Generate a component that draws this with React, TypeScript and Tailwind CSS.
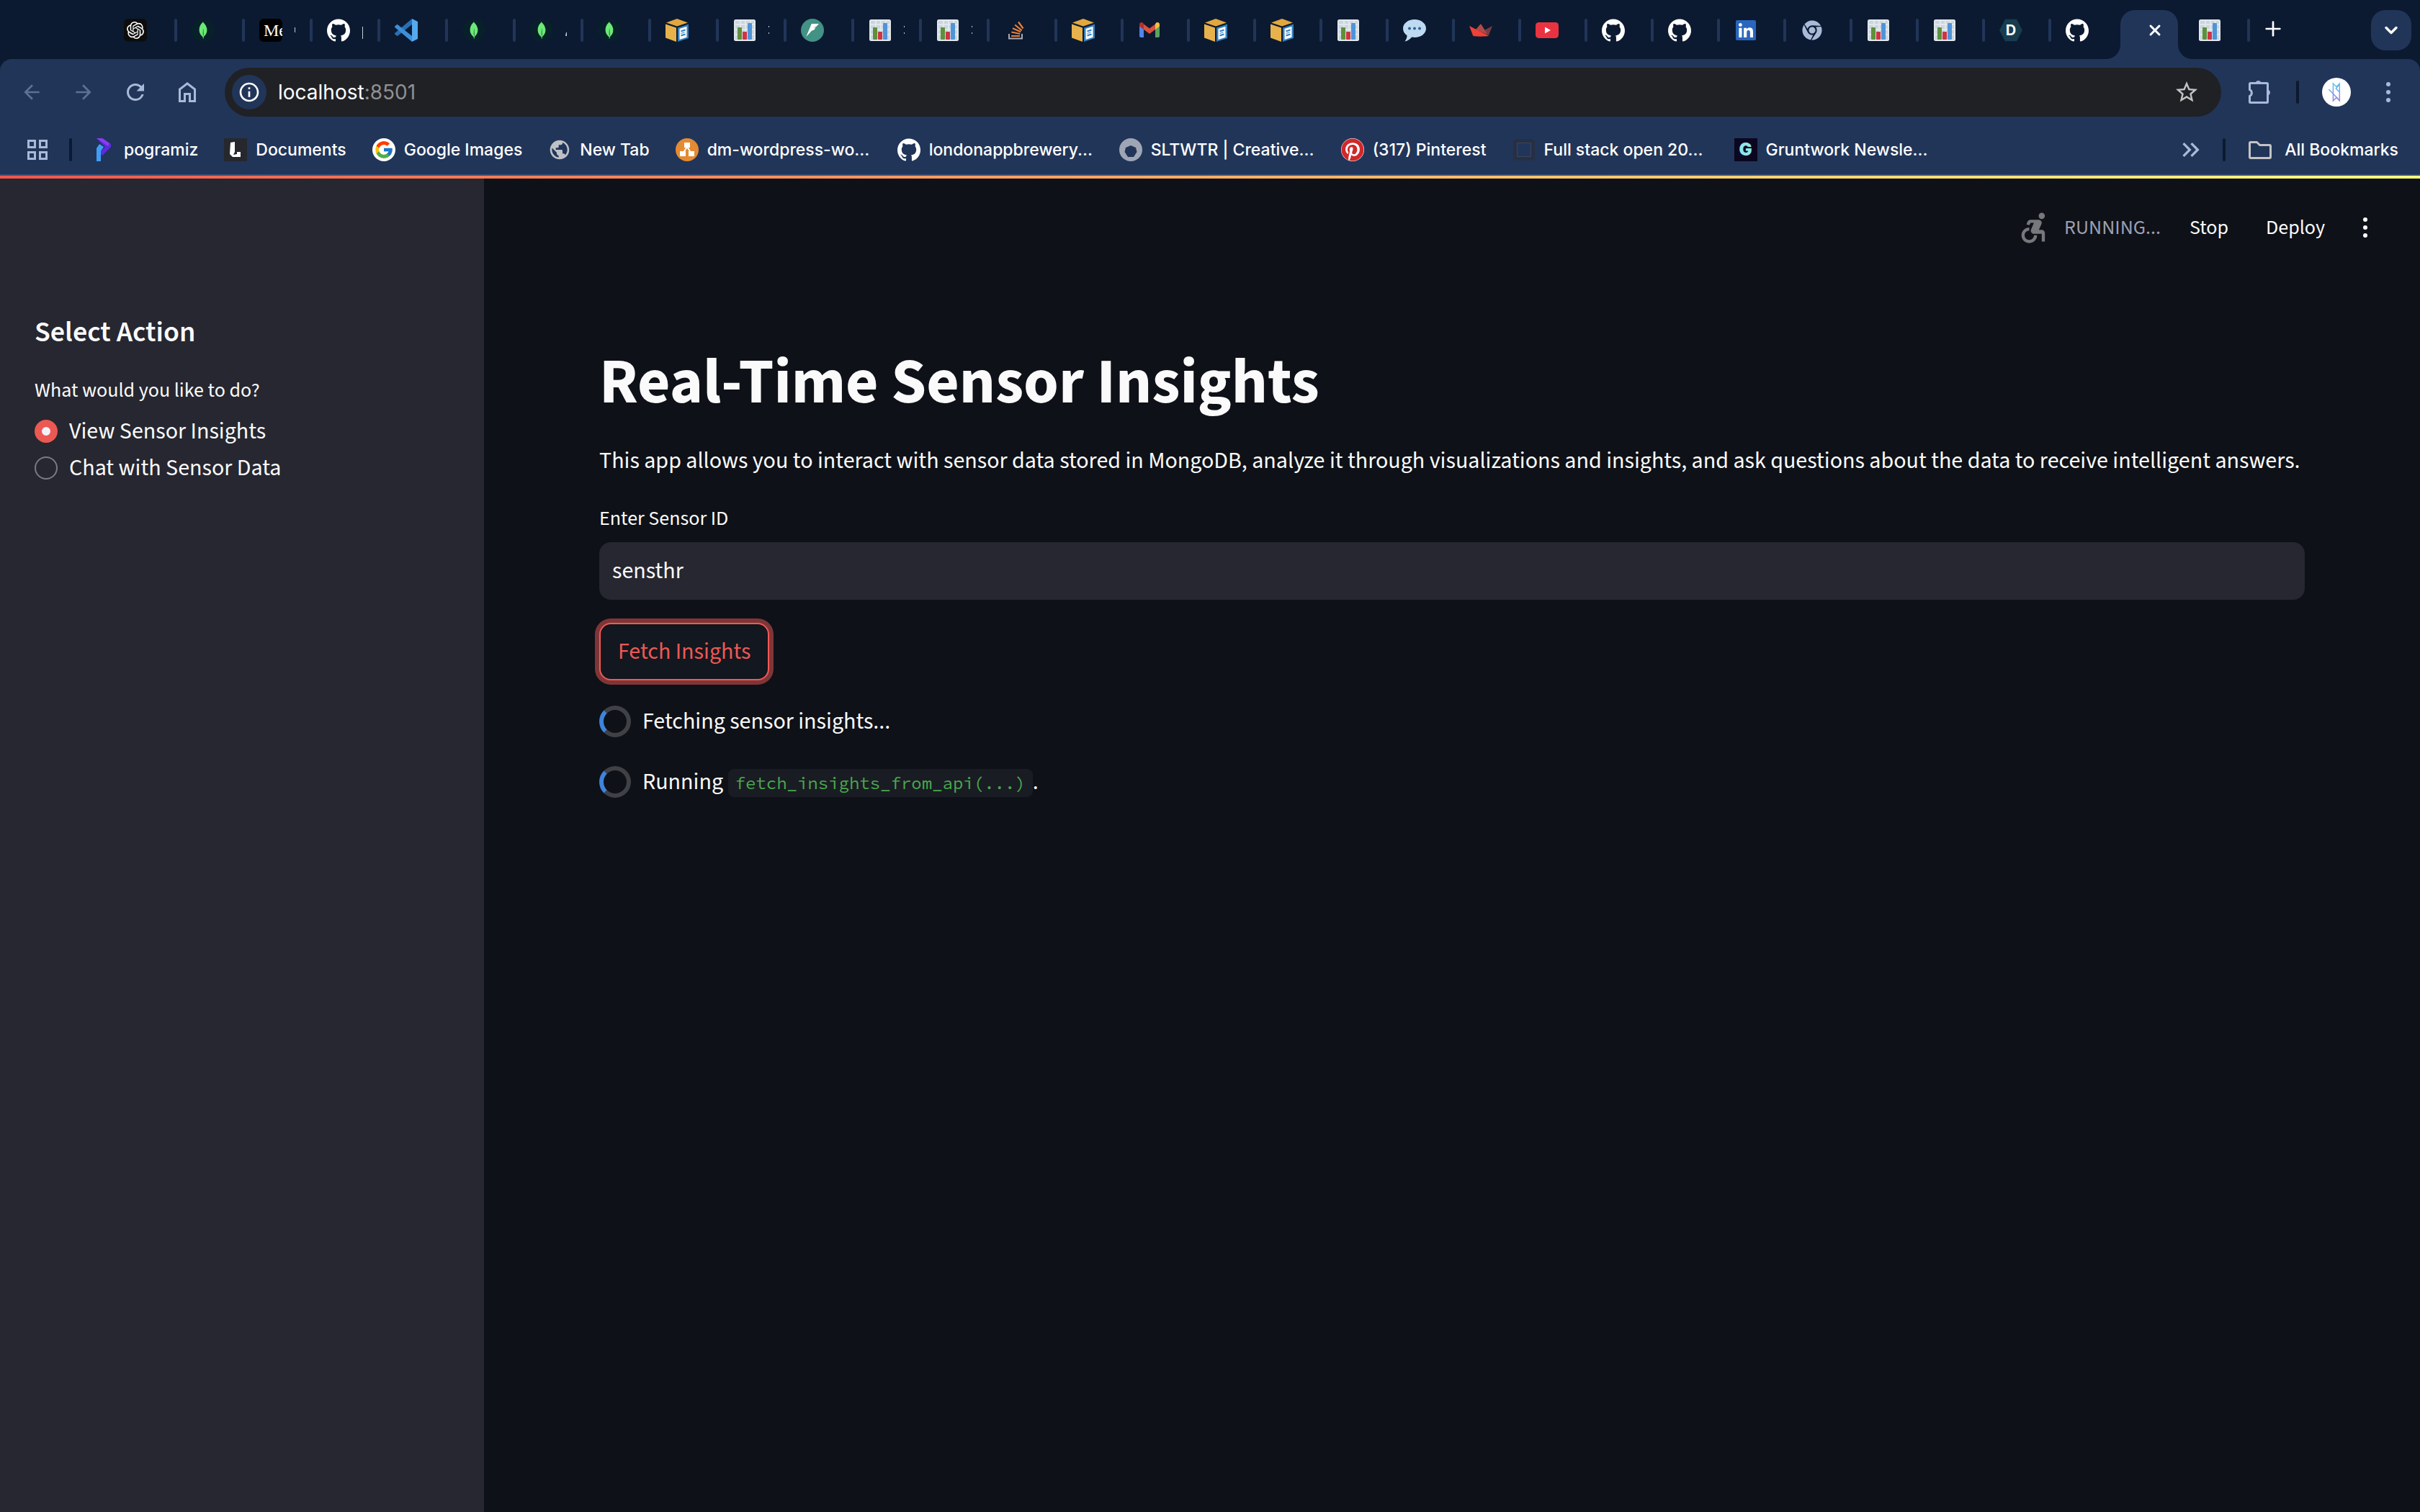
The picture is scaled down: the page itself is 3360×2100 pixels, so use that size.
import type { ReactNode } from 'react'
import { SiOpenai, SiMongodb, SiGithub } from 'react-icons/si'
import { FaChrome, FaLinkedin, FaPinterest } from 'react-icons/fa'
import { FcGoogle } from 'react-icons/fc'
import {
  MdAccessibleForward,
  MdArrowBack,
  MdArrowForward,
  MdInfoOutline,
  MdKeyboardDoubleArrowRight,
  MdPublic,
  MdRefresh,
  MdStarBorder,
} from 'react-icons/md'
import { ChevronDown, Plus, X } from 'lucide-react'

const OpenAiIcon = () => (
  <span className="flex size-8 items-center justify-center rounded-md bg-[#0d0d0d]">
    <SiOpenai className="size-6 text-white" />
  </span>
)

const MongoIcon = () => (
  <span className="flex size-8 items-center justify-center rounded-full bg-[#08202a]">
    <SiMongodb className="size-6 text-[#6cea76]" />
  </span>
)

const MediumIcon = () => (
  <span className="flex size-8 items-center overflow-hidden rounded-md bg-black pl-1.5 font-['Liberation_Serif',serif] text-2xl text-white">
    Me
  </span>
)

const GithubIcon = () => <SiGithub className="size-8 text-white" />

const VsCodeIcon = () => (
  <svg viewBox="0 0 32 32" className="size-8">
    <path d="M24 0v8L4.500 23.500a1.500 1.500 0 0 1-2 0L.5 21.800a1.300 1.300 0 0 1 0-2z" fill="#2a6fb5" />
    <path d="M24 32v-8L4.500 8.500a1.500 1.500 0 0 0-2 0L.5 10.200a1.300 1.300 0 0 0 0 2z" fill="#3c8fd8" />
    <path d="M24 0l8 4v24l-8 4z" fill="#55a9ee" />
  </svg>
)

const BoxIcon = () => (
  <svg viewBox="0 0 32 32" className="size-8">
    <path d="M1 5.500L16 0l15 5.500L16 10.500z" fill="#e2a83e" />
    <path d="M0 7.500l15 5V32L0 26.500z" fill="#e7b24b" />
    <path d="M17 12.500l15-5V27l-15 5z" fill="#2f7fc0" />
    <path d="M19.500 14l10-3.300v15l-10 3.300z" fill="#fff" />
    <path d="M21.500 17.500l6-2M21.500 23.500l6-2" stroke="#2f7fc0" strokeWidth="2" />
    <path d="M21.500 20.500l5-1.700" stroke="#2f7fc0" strokeWidth="1" />
  </svg>
)

const ChartIcon = () => (
  <svg viewBox="0 0 32 32" className="size-8">
    <rect x="1" y="1" width="30" height="30" rx="2.500" fill="#e1e8ed" />
    <path d="M3 3h6v4H3zM11 3h5v4h-5zM18 3h5v4h-5zM25 3h4v4h-4zM3 9h6v5H3zM11 9h5v5h-5zM18 9h5v5h-5zM25 9h4v5h-4zM3 16h6v5H3zM11 16h5v5h-5zM18 16h5v5h-5zM25 16h4v5h-4zM3 23h6v6H3zM11 23h5v6h-5zM18 23h5v6h-5zM25 23h4v6h-4z" fill="#ccd6dd" />
    <rect x="6" y="12" width="6" height="17" rx="1" fill="#5c913b" />
    <rect x="13" y="18" width="6" height="11" rx="1" fill="#cc3545" />
    <rect x="20" y="6" width="6" height="23" rx="1" fill="#4f94d8" />
  </svg>
)

const BoltIcon = () => (
  <svg viewBox="0 0 32 32" className="size-8">
    <circle cx="16" cy="16" r="16" fill="#429285" />
    <path d="M14.700 7H25l-4 4.300-4 .9h3.500L18.300 15.500 15 16.800 7.300 25z" fill="#fff" />
  </svg>
)

const StackIcon = () => (
  <svg viewBox="0 0 32 32" className="size-8">
    <path d="M7 21v6.500h18V21" fill="none" stroke="#a7aaae" strokeWidth="2" />
    <path d="M10 24h12M10.300 18.500l12 2.500M12 13.200l11.200 5M15.200 8.500l9.500 7.800M20 4.500l6.500 9" fill="none" stroke="#e8803a" strokeWidth="2.200" />
  </svg>
)

const GmailIcon = () => (
  <svg viewBox="0 0 32 32" className="size-8">
    <path d="M2 8v16a2 2 0 0 0 2 2h4V11z" fill="#4f86ec" />
    <path d="M30 8v16a2 2 0 0 1-2 2h-4V11z" fill="#58a55c" />
    <path d="M24 7.500V15l6-4.500V8a3 3 0 0 0-4.800-2.400z" fill="#f1bf42" />
    <path d="M8 7.500l8 6 8-6V15l-8 6-8-6z" fill="#d95140" />
    <path d="M8 15V7.500L6.800 5.600A3 3 0 0 0 2 8v2.500z" fill="#b33128" />
  </svg>
)

const SpeechIcon = () => (
  <svg viewBox="0 0 32 32" className="size-8">
    <path d="M16 1c9 0 16 5.500 16 12.500S25 26 16 26c-1.300 0-2.600-.1-3.800-.4C10 28.500 6.500 31 2.500 31.500 4.500 29 5.600 26 5.500 23.200 2 21 0 17.500 0 13.500 0 6.500 7 1 16 1z" fill="#bddaf2" />
    <circle cx="9" cy="13.500" r="2" fill="#35618f" />
    <circle cx="16" cy="13.500" r="2" fill="#35618f" />
    <circle cx="23" cy="13.500" r="2" fill="#35618f" />
  </svg>
)

const CrownIcon = () => (
  <svg viewBox="0 0 32 32" className="size-8">
    <path d="M32 10l-5 13-8-6z" fill="#7a3b42" />
    <path d="M16 7l9.500 15L9 15z" fill="#b14a4a" />
    <path d="M0 10l27 13.500c-.5 1-10 1.500-20.500.8-.8 0-1.300-.3-1.500-1z" fill="#ef4136" />
  </svg>
)

const YoutubeIcon = () => (
  <svg viewBox="0 0 32 32" className="size-8">
    <rect y="5" width="32" height="22" rx="4.500" fill="#ea3340" />
    <path d="M13 11.500v9l8-4.500z" fill="#fff" />
  </svg>
)

const LinkedinIcon = () => (
  <span className="flex size-8 items-center justify-center">
    <FaLinkedin className="size-8 bg-[linear-gradient(#fff,#fff)] bg-[length:20px_20px] bg-center bg-no-repeat text-[#2966bd]" />
  </span>
)

const ChromeIcon = () => (
  <span className="flex size-8 items-center justify-center">
    <FaChrome className="size-7 text-[#a9bad9]" />
  </span>
)

const LetterDIcon = () => (
  <span className="flex size-8 items-center justify-center bg-[#173d4e] font-['Inter',sans-serif] text-xl font-bold text-white [clip-path:polygon(25%_2%,75%_2%,100%_50%,75%_98%,25%_98%,0_50%)]">
    D
  </span>
)

const ProgramizIcon = () => (
  <svg viewBox="0 0 32 32" className="size-8">
    <path d="M6 0h8l12 8v4L14 24l-4-4 8-8z" fill="#5b2be0" />
    <path d="M6 0h8l10 7-2 4z" fill="#8a3df0" />
    <path d="M6 14l4-6 6 4-4 6v14H6z" fill="#3f9df5" />
  </svg>
)

const DocumentsIcon = () => (
  <svg viewBox="0 0 32 32" className="size-8">
    <rect width="32" height="32" fill="#26282e" />
    <path d="M9 6l6-1v14l-2 4 5-1v-3h5v7H12l-4-4z" fill="#fff" />
  </svg>
)

const GoogleIcon = () => (
  <span className="flex size-8 items-center justify-center rounded-full bg-white">
    <FcGoogle className="size-7" />
  </span>
)

const GlobeIcon = () => <MdPublic className="size-8 text-[#bfc1c5]" />

const NodesIcon = () => (
  <svg viewBox="0 0 32 32" className="size-8">
    <circle cx="16" cy="16" r="16" fill="#e38b33" />
    <path d="M16 12l-6 9M16 12l6 9" stroke="#fff" strokeWidth="2" />
    <path d="M12 6h8v7h-8zM6 18h8v7H6zM18 18h8v7h-8z" fill="#fff" />
  </svg>
)

const RingIcon = () => (
  <svg viewBox="0 0 32 32" className="size-8">
    <circle cx="16" cy="16" r="16" fill="#9ea6b6" />
    <path d="M16 10l7 3 1.500 6L20 26h-8l-4.500-7L9 13z" fill="#213559" />
  </svg>
)

const PinterestIcon = () => (
  <span className="flex size-8 rounded-full bg-white">
    <FaPinterest className="size-8 text-[#d0282b]" />
  </span>
)

const FrameIcon = () => (
  <svg viewBox="0 0 32 32" className="size-8">
    <rect x="4" y="4" width="24" height="24" rx="1" fill="none" stroke="#272f42" strokeWidth="6" />
    <rect x="6.500" y="6.500" width="19" height="19" fill="none" stroke="#3a4560" strokeWidth="1" />
  </svg>
)

const GruntworkIcon = () => (
  <span className="flex size-8 items-center justify-center bg-[#0b0720] font-['Inter',sans-serif] text-2xl font-black text-[#8fe5e6]">
    G
  </span>
)

const HomeIcon = () => (
  <svg viewBox="0 0 40 40" className="size-10" fill="none" stroke="currentColor" strokeWidth="3">
    <path d="M9.500 32.500V16L20 8l10.500 8v16.500H23.500V22.500h-7v10z" />
  </svg>
)

const PuzzleIcon = () => (
  <svg viewBox="0 0 32 32" className="size-8">
    <path
      d="M2.500 3.500h23a1 1 0 0 1 1 1v25a1 1 0 0 1-1 1h-23a1 1 0 0 1-1-1v-8a5 5 0 0 0 0-9v-8a1 1 0 0 1 1-1z"
      fill="none"
      stroke="currentColor"
      strokeWidth="3"
    />
    <path d="M9.500 3a4.500 4.500 0 0 1 8 0zM27 12.500a4.500 4.500 0 0 1 0 8z" fill="currentColor" stroke="currentColor" />
  </svg>
)

const AppsIcon = () => (
  <svg viewBox="0 0 28 28" className="size-7" fill="none" stroke="currentColor" strokeWidth="3">
    <path d="M1.500 1.500h9v9h-9zM17.500 1.500h9v9h-9zM1.500 17.500h9v9h-9zM17.500 17.500h9v9h-9z" />
  </svg>
)

const FolderIcon = () => (
  <svg viewBox="0 0 32 32" className="size-8 text-[#c4c4c4]" fill="none" stroke="currentColor" strokeWidth="3" strokeLinejoin="round">
    <path d="M3 5.500h8.500l4 4H29a1.500 1.500 0 0 1 1.500 1.500v15A1.500 1.500 0 0 1 29 27.500H3A1.500 1.500 0 0 1 1.500 26V7A1.500 1.500 0 0 1 3 5.500z" />
  </svg>
)

const AvatarIcon = () => (
  <svg viewBox="0 0 40 40" className="size-10">
    <defs>
      <linearGradient id="avatar" x1="0" y1="0" x2="0" y2="1">
        <stop offset="0" stopColor="#5cc4ee" />
        <stop offset="1" stopColor="#9a7fe0" />
      </linearGradient>
    </defs>
    <circle cx="20" cy="20" r="20" fill="#fff" />
    <path d="M9.300 16L22.500 29.500M15.400 32V8l4.600 4.500L24.300 8v24L20 27.500zM24.300 9l-5 6 5 5" fill="none" stroke="url(#avatar)" strokeWidth="1.500" />
  </svg>
)

const Dots = () => (
  <svg viewBox="0 0 8 28" className="h-7 w-2" fill="currentColor">
    <circle cx="4" cy="3" r="3" />
    <circle cx="4" cy="14" r="3" />
    <circle cx="4" cy="25" r="3" />
  </svg>
)

// Slivers of the tab titles that stay visible beside the icon
const slivers = {
  curve: 'M0 8h1v7H0z',
  stem: 'M0 7h1v17H0z',
  slant: 'M1 15h1v5H0z',
  colon: 'M0 6h1v2H0zM0 15h1v2H0z',
}

type TabItem = { name: string; icon: () => ReactNode; sliver?: keyof typeof slivers }

const wideTabs: TabItem[] = [
  { name: 'ChatGPT', icon: OpenAiIcon },
  { name: 'MongoDB', icon: MongoIcon },
  { name: 'Medium', icon: MediumIcon, sliver: 'curve' },
  { name: 'GitHub', icon: GithubIcon, sliver: 'stem' },
  { name: 'VS Code', icon: VsCodeIcon },
  { name: 'MongoDB', icon: MongoIcon },
  { name: 'MongoDB Atlas', icon: MongoIcon, sliver: 'slant' },
  { name: 'MongoDB', icon: MongoIcon },
  { name: 'AWS', icon: BoxIcon },
  { name: 'Sensors', icon: ChartIcon, sliver: 'colon' },
  { name: 'Fast', icon: BoltIcon },
  { name: 'Sensors', icon: ChartIcon, sliver: 'colon' },
  { name: 'Sensors', icon: ChartIcon, sliver: 'colon' },
  { name: 'Stack Overflow', icon: StackIcon },
]

const narrowTabs: TabItem[] = [
  { name: 'AWS', icon: BoxIcon },
  { name: 'Gmail', icon: GmailIcon },
  { name: 'AWS', icon: BoxIcon },
  { name: 'AWS', icon: BoxIcon },
  { name: 'Sensors', icon: ChartIcon },
  { name: 'Chat', icon: SpeechIcon },
  { name: 'Streamlit', icon: CrownIcon },
  { name: 'YouTube', icon: YoutubeIcon },
  { name: 'GitHub', icon: GithubIcon },
  { name: 'GitHub', icon: GithubIcon },
  { name: 'LinkedIn', icon: LinkedinIcon },
  { name: 'Chrome', icon: ChromeIcon },
  { name: 'Sensors', icon: ChartIcon },
  { name: 'Sensors', icon: ChartIcon },
  { name: 'Docs', icon: LetterDIcon },
]

const bookmarks = [
  { label: 'pogramiz', icon: ProgramizIcon },
  { label: 'Documents', icon: DocumentsIcon },
  { label: 'Google Images', icon: GoogleIcon },
  { label: 'New Tab', icon: GlobeIcon },
  { label: 'dm-wordpress-wo...', icon: NodesIcon, wide: true },
  { label: 'londonappbrewery...', icon: GithubIcon, wide: true },
  { label: 'SLTWTR | Creative...', icon: RingIcon, wide: true },
  { label: '(317) Pinterest', icon: PinterestIcon },
  { label: 'Full stack open 20...', icon: FrameIcon, wide: true },
  { label: 'Gruntwork Newsle...', icon: GruntworkIcon, wide: true },
]

function Tab({ tab, wide, divider = true }: { tab: TabItem; wide?: boolean; divider?: boolean }) {
  return (
    <button aria-label={tab.name} className={`flex h-14 shrink-0 items-center pl-5 ${wide ? 'w-[94px]' : 'w-[92px]'}`}>
      <tab.icon />
      {tab.sliver && (
        <svg viewBox="0 0 2 24" className="ml-[17px] h-6 w-0.5" fill="#c6ccd6">
          <path d={slivers[tab.sliver]} />
        </svg>
      )}
      {divider && <span className="ml-auto h-8 w-1 rounded-xs bg-[#213559]" />}
    </button>
  )
}

function TabStrip() {
  return (
    <div className="flex h-[82px] items-start pt-[14px] pr-3 pl-[152px]">
      {wideTabs.map((tab, i) => (
        <Tab key={i} tab={tab} wide />
      ))}
      {narrowTabs.map((tab, i) => (
        <Tab key={i} tab={tab} />
      ))}
      <Tab tab={{ name: 'GitHub', icon: GithubIcon }} divider={false} />
      {/* Active tab */}
      <div className="relative mr-2 ml-1 flex h-[68px] w-20 shrink-0 items-start justify-end rounded-t-[20px] bg-[#213559] pr-5">
        <svg viewBox="0 0 20 20" className="absolute bottom-0 -left-5 size-5">
          <path d="M20 0v20H0A20 20 0 0 0 20 0z" fill="#213559" />
        </svg>
        <button aria-label="Close tab" className="flex h-14 w-6 items-center justify-center text-white">
          <X className="size-6" strokeWidth={3} />
        </button>
        <svg viewBox="0 0 20 20" className="absolute -right-5 bottom-0 size-5">
          <path d="M0 0v20h20A20 20 0 0 1 0 0z" fill="#213559" />
        </svg>
      </div>
      <Tab tab={{ name: 'Sensors', icon: ChartIcon }} />
      <button aria-label="New tab" className="ml-4 flex h-[52px] w-8 items-center justify-center text-white">
        <Plus className="size-8" strokeWidth={2} />
      </button>
      <button aria-label="Search tabs" className="ml-auto flex size-14 items-center justify-center rounded-[20px] bg-[#213559] text-white">
        <ChevronDown className="size-7" strokeWidth={3} />
      </button>
    </div>
  )
}

function Toolbar() {
  return (
    <div className="flex h-[92px] items-center pr-10 pl-6 text-[#a9bad9]">
      <div className="mr-8 flex gap-8">
        <button aria-label="Back" className="text-[#5d7196]">
          <MdArrowBack className="size-10 p-1" />
        </button>
        <button aria-label="Forward" className="text-[#5d7196]">
          <MdArrowForward className="size-10 p-1" />
        </button>
        <button aria-label="Reload">
          <MdRefresh className="size-10 p-0.5" />
        </button>
        <button aria-label="Home">
          <HomeIcon />
        </button>
      </div>
      <div className="flex h-[68px] flex-1 items-center rounded-full bg-[#202124] pr-[30px] pl-[10px]">
        <button aria-label="Site information" className="flex size-12 items-center justify-center rounded-full bg-[#213559] text-white">
          <MdInfoOutline className="size-8" />
        </button>
        <a href="http://localhost:8501" className="ml-4 flex-1 text-[28px] text-[#8f9094]">
          <span className="text-white">localhost</span>:8501
        </a>
        <button aria-label="Bookmark this page" className="text-[#c4c4c4]">
          <MdStarBorder className="size-9" />
        </button>
      </div>
      <button aria-label="Extensions" className="ml-[38px]">
        <PuzzleIcon />
      </button>
      <span className="ml-[34px] h-8 w-1 rounded-xs bg-[#0b1a30]" />
      <button aria-label="Profile" className="ml-8">
        <AvatarIcon />
      </button>
      <button aria-label="Browser menu" className="ml-12">
        <Dots />
      </button>
    </div>
  )
}

function BookmarkBar() {
  return (
    <div className="flex h-[68px] items-center pr-[30px] pl-[38px] text-[23px] font-medium text-white">
      <button aria-label="Apps" className="text-[#a9bad9]">
        <AppsIcon />
      </button>
      <span className="ml-[30px] h-8 w-1 rounded-xs bg-[#0b1a30]" />
      <nav className="ml-7 flex gap-9">
        {bookmarks.map(({ label, icon: Icon, wide }) => (
          <a key={label} href="#" className="flex items-center gap-3 whitespace-nowrap">
            <Icon />
            <span className={wide ? 'w-[228px]' : ''}>{label}</span>
          </a>
        ))}
      </nav>
      <button aria-label="More bookmarks" className="ml-auto text-[#a9bad9]">
        <MdKeyboardDoubleArrowRight className="size-10" />
      </button>
      <span className="ml-6 h-8 w-1 rounded-xs bg-[#0b1a30]" />
      <a href="#" className="ml-8 flex items-center gap-[18px]">
        <FolderIcon />
        All Bookmarks
      </a>
    </div>
  )
}

function Sidebar() {
  const actions = ['View Sensor Insights', 'Chat with Sensor Data']

  return (
    <aside className="w-1/5 bg-[#262730] px-12 pt-[190px]">
      <h2 className="text-[40px] leading-[48px] font-semibold">Select Action</h2>
      <fieldset className="mt-9">
        <legend className="text-[28px] leading-10">What would you like to do?</legend>
        <div className="mt-[21px] flex flex-col gap-[19px]">
          {actions.map((action, i) => (
            <label key={action} className="flex h-8 items-center gap-4 text-[32px] leading-8">
              <input
                type="radio"
                name="action"
                defaultChecked={i === 0}
                className="size-8 shrink-0 appearance-none rounded-full border-2 border-[#7b7c82] checked:border-[10px] checked:border-[#ec5953] checked:bg-[#f2f3f7]"
              />
              {action}
            </label>
          ))}
        </div>
      </fieldset>
    </aside>
  )
}

const Spinner = () => <i className="size-11 shrink-0 rounded-full border-[6px] border-[#404146] border-l-[#3d84dc]" />

function Main() {
  return (
    <main className="flex-1 bg-[#0e1117]">
      <header className="flex h-[136px] items-center justify-end pr-[72px] text-[28px]">
        <MdAccessibleForward className="size-[52px] text-[#77787c]" />
        <span className="ml-4 text-[#9d9fb1]">RUNNING...</span>
        <button className="ml-10">Stop</button>
        <button className="ml-[52px]">Deploy</button>
        <button aria-label="Main menu" className="ml-[52px]">
          <Dots />
        </button>
      </header>

      <div className="px-40 pt-24">
        <h1 className="text-[88px] leading-[104px] font-bold">Real-Time Sensor Insights</h1>
        <p className="mt-8 text-[32px] leading-[48px]">
          This app allows you to interact with sensor data stored in MongoDB, analyze it through visualizations and insights, and ask questions about the data to receive intelligent answers.
        </p>
        <label htmlFor="sensor-id" className="mt-9 block text-[28px] leading-10">
          Enter Sensor ID
        </label>
        <input
          id="sensor-id"
          type="text"
          defaultValue="sensthr"
          className="mt-[13px] h-20 w-full rounded-2xl bg-[#262730] px-[18px] text-[32px] outline-none"
        />
        <button className="mt-8 block h-20 rounded-2xl border-2 border-[#f05a54] bg-[#131720] px-6 text-[32px] text-[#ec5953] ring-[6px] ring-[#7f3537]">
          Fetch Insights
        </button>

        <div className="mt-[35px] flex flex-col gap-10 text-[32px] leading-[44px]">
          <div className="flex items-center gap-4">
            <Spinner />
            <p>Fetching sensor insights...</p>
          </div>
          <div className="flex items-center gap-4">
            <Spinner />
            <p>
              Running{' '}
              <code className="rounded-lg bg-[#1a1c24] px-2.5 py-1 font-['Source_Code_Pro','Liberation_Mono',monospace] text-2xl text-[#49a84c]">
                fetch_insights_from_api(...)
              </code>
              .
            </p>
          </div>
        </div>
      </div>
    </main>
  )
}

export default function App() {
  return (
    <div className="flex min-h-screen flex-col bg-[#0b1a30] font-['Inter',sans-serif]">
      <TabStrip />
      <div className="rounded-t-2xl border-b-2 border-[#3a4d73] bg-[#213559]">
        <Toolbar />
        <BookmarkBar />
      </div>
      <div className="h-1 bg-gradient-to-r from-[#f0554f] to-[#fffd80]" />
      <div className="flex flex-1 font-['Source_Sans_3','Noto_Sans',sans-serif] text-[#fafafa]">
        <Sidebar />
        <Main />
      </div>
    </div>
  )
}
